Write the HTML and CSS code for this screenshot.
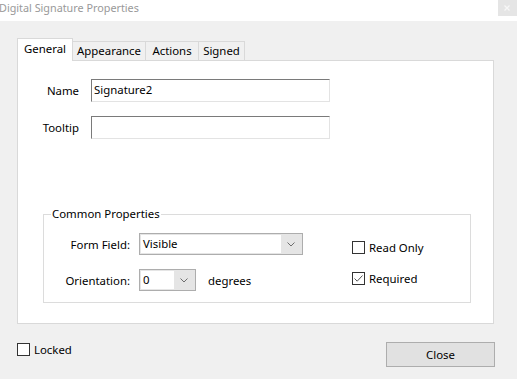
FILE: index.html
```html
<!DOCTYPE html>
<html>
<head>
<meta charset="utf-8">
<link rel="stylesheet" href="styles.css">
</head>
<body>
<div class="titlebar">
  <span class="title">Digital Signature Properties</span>
  <span class="close-x"><svg width="19" height="16" viewBox="0 0 19 16"><path d="M6.5 5.5 L11.5 10.5 M11.5 5.5 L6.5 10.5" stroke="#f7f7f7" stroke-width="1.2" fill="none"/></svg></span>
</div>
<div class="main">
  <div class="tabs">
    <div class="tab selected t-general">General</div>
    <div class="tab t-appearance">Appearance</div>
    <div class="tab t-actions">Actions</div>
    <div class="tab t-signed">Signed</div>
  </div>
  <div class="panel">
    <div class="form">
      <label class="lbl">Name</label>
      <div class="input">Signature2</div>
      <label class="lbl">Tooltip</label>
      <div class="input"></div>
    </div>
    <fieldset class="group">
      <legend>Common Properties</legend>
      <div class="group-body">
        <div class="group-grid">
          <span class="glbl">Form Field:</span>
          <div class="combo wide"><span class="combo-text">Visible</span><span class="combo-arrow"><svg width="8" height="5" viewBox="0 0 8 5"><path d="M0.5 0.5 L4 4 L7.5 0.5" stroke="#6d6d6d" stroke-width="1" fill="none"/></svg></span></div>
          <span class="glbl">Orientation:</span>
          <div class="orient">
            <div class="combo narrow"><span class="combo-text">0</span><span class="combo-arrow"><svg width="8" height="5" viewBox="0 0 8 5"><path d="M0.5 0.5 L4 4 L7.5 0.5" stroke="#6d6d6d" stroke-width="1" fill="none"/></svg></span></div>
            <span class="deg">degrees</span>
          </div>
        </div>
        <div class="checks">
          <div class="check"><span class="box"></span><span>Read Only</span></div>
          <div class="check"><span class="box"><svg width="11" height="11" viewBox="0 0 11 11"><path d="M1.5 5.5 L4.2 8.2 L9.5 2.5" stroke="#555" stroke-width="1" fill="none"/></svg></span><span>Required</span></div>
        </div>
      </div>
    </fieldset>
  </div>
  <div class="footer">
    <div class="check locked"><span class="box"></span><span>Locked</span></div>
    <div class="button">Close</div>
  </div>
</div>
</body>
</html>
```

FILE: styles.css
```css
html, body {
  margin: 0;
  padding: 0;
}
body {
  background: #f0f0f0;
  font-family: "Noto Sans", "Open Sans", sans-serif;
  font-size: 11.4px;
  color: #000;
  width: 517px;
  height: 379px;
  overflow: hidden;
}
.titlebar {
  height: 21px;
  background: #fff;
  display: flex;
  justify-content: space-between;
  align-items: flex-start;
}
.title {
  color: #999;
  line-height: 16px;
  margin-left: -1px;
  font-size: 10.8px;
}
.close-x {
  width: 19px;
  height: 16px;
  background: #e5e5e5;
  display: block;
}
.close-x svg { display: block; }
.main {
  padding: 17px 0 0 17px;
}
.tabs {
  display: flex;
  align-items: flex-end;
  height: 22px;
}
.tab {
  box-sizing: border-box;
  height: 19px;
  border: 1px solid #d9d9d9;
  border-bottom: none;
  background: #f0f0f0;
  margin-left: -1px;
  display: flex;
  align-items: center;
  justify-content: center;
  line-height: 16px;
  padding-bottom: 1px;
}
.tab.selected {
  height: 23px;
  background: #fff;
  margin-left: 0;
  margin-bottom: -1px;
  position: relative;
  z-index: 2;
  padding-bottom: 3px;
}
.t-general { width: 56px; }
.t-appearance { width: 74px; }
.t-actions { width: 54px; }
.t-signed { width: 47px; }
.panel {
  box-sizing: border-box;
  width: 477px;
  height: 264px;
  border: 1px solid #d9d9d9;
  background: #fff;
  padding-top: 18px;
}
.form {
  display: grid;
  grid-template-columns: 61px 239px;
  column-gap: 12px;
  row-gap: 14px;
  align-items: center;
}
.lbl {
  text-align: right;
}
.input {
  box-sizing: border-box;
  height: 23px;
  border-top: 1px solid #7a7a7a;
  border-left: 1px solid #7a7a7a;
  border-right: 1px solid #e3e3e3;
  border-bottom: 1px solid #e3e3e3;
  padding-left: 2px;
  line-height: 20px;
}
.group {
  box-sizing: border-box;
  width: 428px;
  margin: 67px 0 0 25px;
  padding: 11px 0 11px 0;
  border: 1px solid #dcdcdc;
  min-width: 0;
}
.group legend {
  padding: 0 1px;
  margin-left: 7px;
  line-height: 16px;
}
.group-body {
  display: flex;
  align-items: flex-start;
}
.group-grid {
  display: grid;
  grid-template-columns: 86px 164px;
  column-gap: 9px;
  row-gap: 14px;
  align-items: center;
}
.glbl {
  text-align: right;
}
.combo {
  box-sizing: border-box;
  height: 22px;
  border: 1px solid #adadad;
  background: #e5e5e5;
  display: flex;
  padding: 1px;
}
.combo.wide { width: 164px; }
.combo.narrow { width: 57px; }
.combo-text {
  flex: 1;
  background: #fff;
  line-height: 18px;
  padding-left: 2px;
}
.combo-arrow {
  width: 20px;
  display: flex;
  align-items: center;
  justify-content: center;
}
.combo-arrow svg { display: block; }
.orient {
  display: flex;
  align-items: center;
  gap: 12px;
}
.checks {
  margin-left: 49px;
  padding-top: 8px;
  display: flex;
  flex-direction: column;
  gap: 18px;
}
.check {
  display: flex;
  align-items: center;
  gap: 4px;
  height: 13px;
  line-height: 13px;
}
.box {
  box-sizing: border-box;
  width: 13px;
  height: 13px;
  border: 1px solid #333;
  background: #fff;
  display: block;
}
.box svg { display: block; }
.footer {
  width: 478px;
  display: flex;
  justify-content: space-between;
  align-items: flex-start;
  margin-top: 18px;
}
.locked {
  margin-top: 1px;
}
.button {
  box-sizing: border-box;
  width: 109px;
  height: 25px;
  border: 1px solid #adadad;
  background: #e1e1e1;
  text-align: center;
  line-height: 23px;
}
```
